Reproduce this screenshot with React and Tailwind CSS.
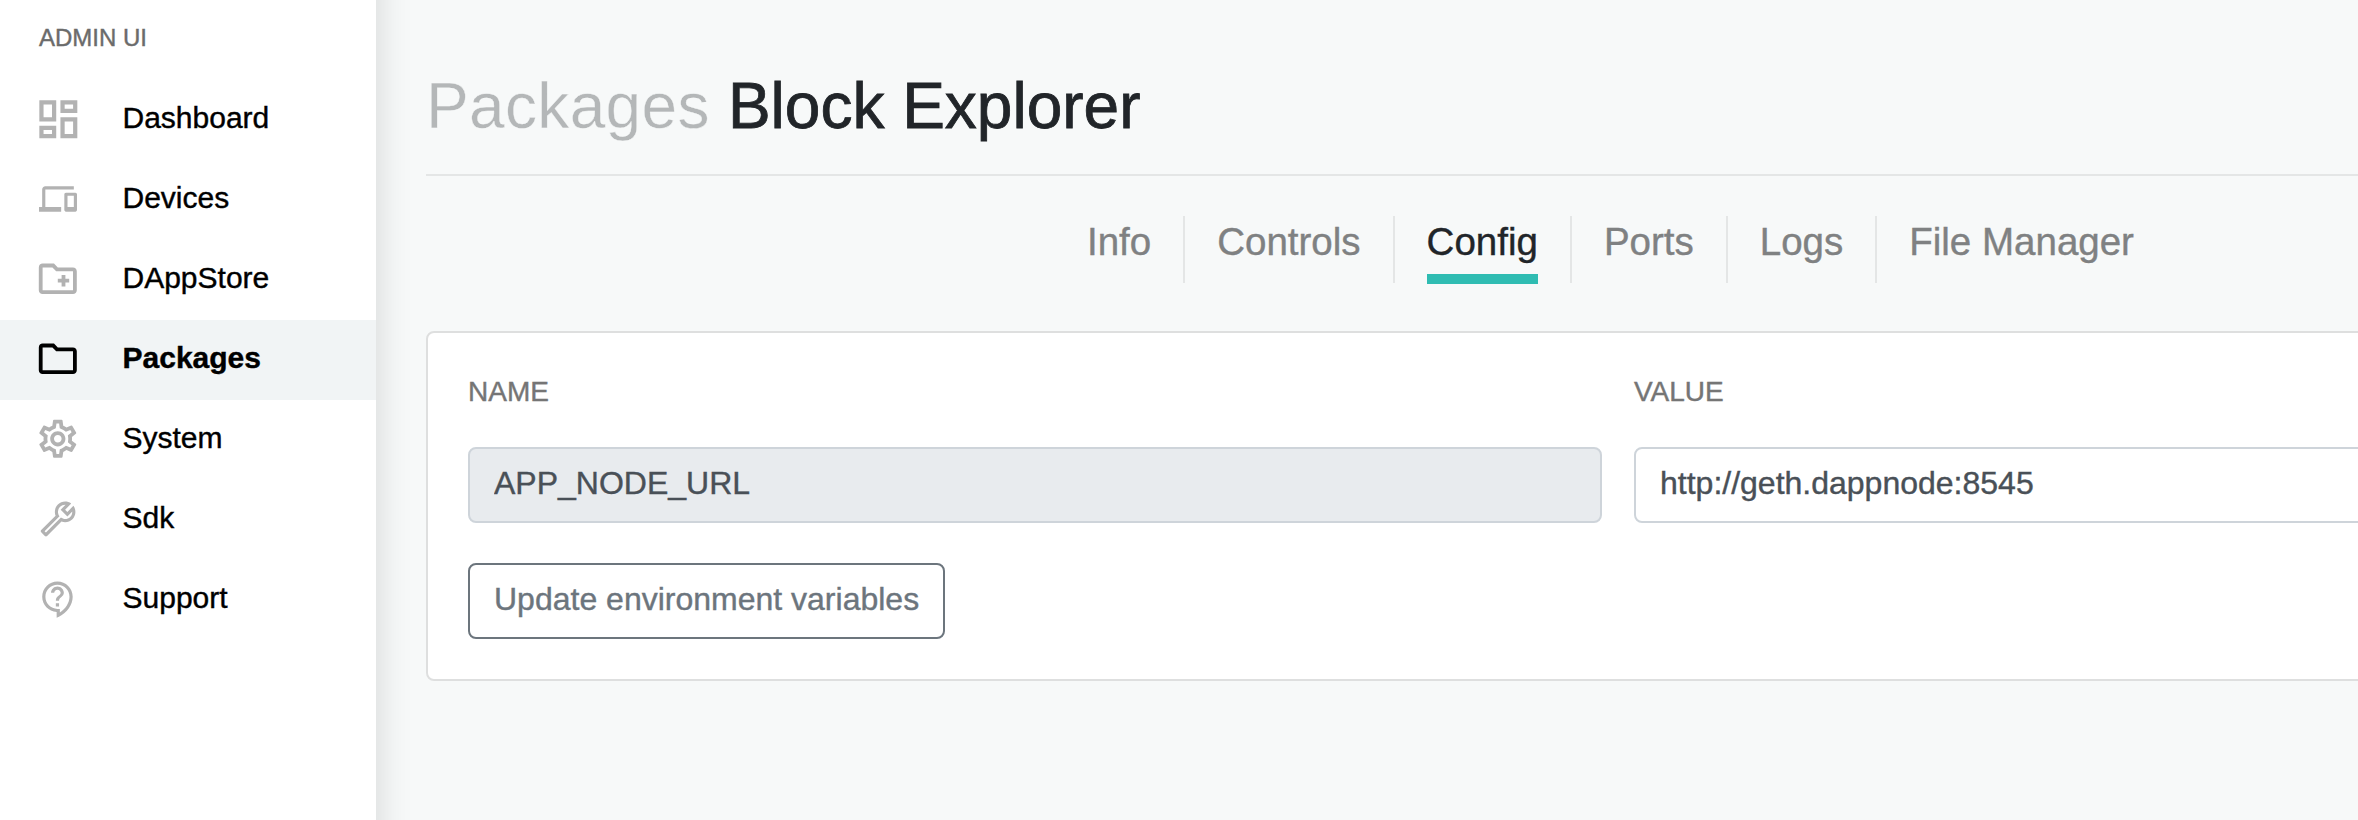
import {
  MdOutlineDashboard,
  MdDevices,
  MdOutlineCreateNewFolder,
  MdOutlineSettings,
  MdOutlineBuild,
  MdOutlineContactSupport,
} from "react-icons/md";

function FolderIcon() {
  return (
    <svg width="45.6" height="45.6" viewBox="0 0 24 24" fill="currentColor">
      <path d="M9.17 6l2 2H20v10H4V6h5.17M10 4H4c-1.1 0-1.99.9-1.99 2L2 18c0 1.1.9 2 2 2h16c1.1 0 2-.9 2-2V8c0-1.1-.9-2-2-2h-8l-2-2z" />
    </svg>
  );
}

const navItems = [
  { name: "Dashboard", icon: <MdOutlineDashboard size={50.67} /> },
  { name: "Devices", icon: <MdDevices size={38} /> },
  { name: "DAppStore", icon: <MdOutlineCreateNewFolder size={45.6} /> },
  { name: "Packages", icon: <FolderIcon />, active: true },
  { name: "System", icon: <MdOutlineSettings size={45.6} /> },
  { name: "Sdk", icon: <MdOutlineBuild size={38} className="-scale-x-100" /> },
  { name: "Support", icon: <MdOutlineContactSupport size={38.5} /> },
];

const tabs = ["Info", "Controls", "Config", "Ports", "Logs", "File Manager"];

function SideBar() {
  return (
    <aside className="z-10 -my-20 h-[980px] w-[376px] shrink-0 bg-white py-20 shadow-[0_0_34px_rgba(0,0,0,0.15)]">
      <div className="flex h-20 items-start pt-[22px] pl-[39px] text-[24px] leading-8 text-[#6b6b6b]">ADMIN UI</div>
      <nav>
        {navItems.map((item) => (
          <a
            key={item.name}
            className={`flex h-20 items-center pb-0.5 pl-[39px] text-[30px] text-black ${item.active ? "bg-[#f1f4f5] font-bold" : ""}`}
          >
            <span className={`flex w-[38px] items-center justify-center ${item.active ? "text-black" : "text-[#b2b2b2]"}`}>
              <span className="shrink-0">{item.icon}</span>
            </span>
            <span className="ml-[45.5px] pb-[3px] leading-[44px]">{item.name}</span>
          </a>
        ))}
      </nav>
    </aside>
  );
}

function Tabs({ active }) {
  return (
    <div className="mt-10 flex h-[68px] pl-[629px] text-[38.5px] leading-[52px]">
      {tabs.map((tab, i) => (
        <div key={tab} className={`h-[67px] px-8 ${i ? "border-l-2 border-[#e4e6e6]" : ""}`}>
          <div className={`h-[68px] ${tab === active ? "border-b-10 border-[#2fbcb2] text-[#212529]" : "text-[#7f8182]"}`}>{tab}</div>
        </div>
      ))}
    </div>
  );
}

export default function App() {
  return (
    <div className="flex h-[820px] w-full overflow-hidden bg-[#f7f9f9] font-['Liberation_Sans',Arial,sans-serif] [-webkit-text-stroke:0.4px]">
      <SideBar />
      <main className="min-w-0 flex-1 pl-[50px]">
        <div className="w-[2384px]">
          <h1 className="flex h-[176px] gap-[18px] border-b-2 border-[#e4e6e6] pt-[68px] text-[64px] leading-[76px] text-[#212529]">
            <span className="tracking-[0.35px] text-[#b4b7b8] [-webkit-text-stroke:0.4px_#f7f9f9]">Packages</span>
            <span className="[-webkit-text-stroke:0.8px]">Block Explorer</span>
          </h1>
          <Tabs active="Config" />
          <section className="mt-[47px] h-[350px] rounded-lg border-2 border-[#dedfdf] bg-white p-10">
            <div className="grid grid-cols-2 gap-x-8">
              <div className="mb-9 h-[38px] text-[28px] leading-[38px] text-[#757575]">NAME</div>
              <div className="mb-9 h-[38px] text-[28px] leading-[38px] text-[#757575]">VALUE</div>
              <input
                readOnly
                value="APP_NODE_URL"
                className="h-[76px] rounded-lg border-2 border-[#ced4da] bg-[#e8ebee] px-6 pb-1 text-[32px] text-[#495057]"
              />
              <input
                readOnly
                value="http://geth.dappnode:8545"
                className="h-[76px] rounded-lg border-2 border-[#ced4da] bg-white px-6 pb-1 text-[32px] text-[#495057]"
              />
            </div>
            <button className="mt-10 h-[76px] rounded-lg border-2 border-[#6c757d] px-6 pb-1 text-[32px] text-[#6c757d]">
              Update environment variables
            </button>
          </section>
        </div>
      </main>
    </div>
  );
}
